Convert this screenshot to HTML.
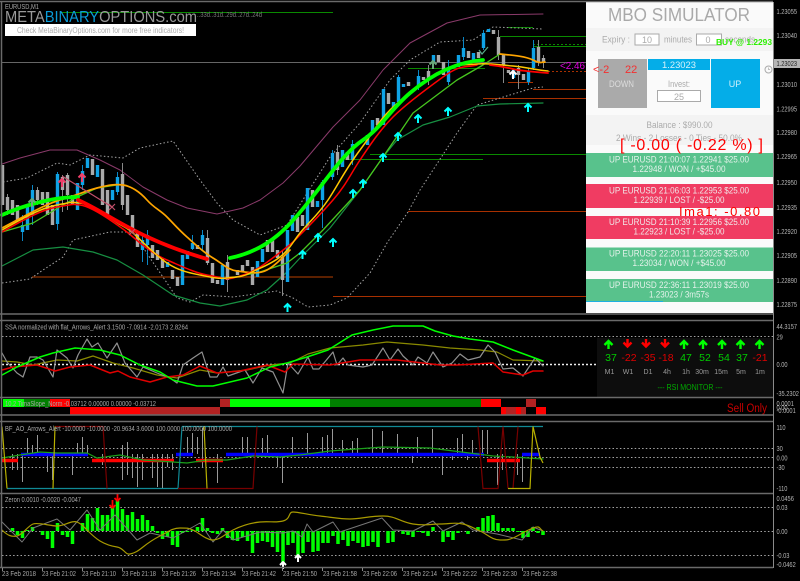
<!DOCTYPE html>
<html><head><meta charset="utf-8"><title>MBO Simulator</title>
<style>
html,body{margin:0;padding:0;background:#000;width:800px;height:581px;overflow:hidden}
svg{display:block;filter:blur(.3px)}
text{font-family:"Liberation Sans",sans-serif}
.ax{fill:#b5b5b5;font-size:7.2px}
.t{fill:#a8a8a8;font-size:7.2px}
.c{fill:#f0f6f3;font-size:8.8px;text-anchor:middle;opacity:.92}
.p{fill:#ababab;font-size:9px}
.n{font-size:10.5px;text-anchor:middle}
.l{fill:#999;font-size:7px;text-anchor:middle}
.d{fill:none;stroke:#a5a5a5;stroke-width:1;stroke-dasharray:1.5 2.2}
.f{fill:none;stroke-linejoin:round;stroke-linecap:round}
</style></head><body>
<svg width="800" height="581" viewBox="0 0 800 581" xmlns="http://www.w3.org/2000/svg">
<rect width="800" height="581" fill="#000"/>

<!-- horizontal levels -->
<g fill="none" stroke-width="1">
<path stroke="#0a8a00" d="M60 12.5H333M500 36.5H586M533 46.5H586M508 27.5H533M370 154.5H586M345 159.5H483M408 68.5H485"/>
<path stroke="#0a8a00" stroke-dasharray="2 2" d="M533 44.5H586"/>
<path stroke="#a83000" d="M533 89.5H586M483 98.5H586M508 82.5H533M408 211.5H586M333 296.5H586"/>
<path stroke="#7a2a00" stroke-width="1.5" d="M32 277H333"/>
<path stroke="#a83000" stroke-dasharray="2 2" d="M548 71.5H586"/>
</g>
<path d="M2 62.5H773" stroke="#666" stroke-width="1"/>

<!-- bands -->
<polyline class="f" stroke="#8a3a6a" stroke-width="1" points="2,164 20,158 50,150 77,150 100,160 120,170 143,187 167,200 187,208 217,214 243,208 260,200 283,183 300,166 333,127 360,100 383,70 410,43 447,23 480,15 543,14"/>
<polyline class="d" points="3,182 27,178 57,163 70,165 90,155 123,158 140,148 173,141 200,180 217,203 233,220 260,235 287,225 330,157 360,123 390,80 410,60 440,42 473,40 493,27 543,29"/>
<polyline class="d" points="2,283 30,279 43,270 63,257 73,240 110,232 133,232 150,258 167,283 177,298 190,302 203,295 233,297 277,291 293,298 308,307 330,305 347,298 370,273 387,243 408,212 420,190 457,133 477,105 533,88 543,87"/>
<polyline class="f" stroke="#178f42" stroke-width="1.2" points="2,266 33,250 63,247 93,252 117,260 143,275 173,295 200,303 220,306 247,300 267,290 287,272 300,258 330,228 360,190 383,157 397,140 423,125 450,117 477,106 500,104 543,103"/>

<!-- candles wicks -->
<g fill="none" stroke-width="1">
<path stroke="#888" d="M7.5 194V215M37.5 187V205M62.5 175V212M67.5 173V210M122.5 163V210M207.5 230V265M227.5 255V292M282.5 250V296M337.5 145V175M428.5 65V85M498.5 30V60M503.5 55V83M518.5 65V89M538.5 40V66M543.5 55V68"/>
<path stroke="#0b86c4" d="M22.5 215V241M32.5 185V225M57.5 172V230M82.5 165V190M117.5 172V195M142.5 235V262M147.5 230V265M192.5 235V250M202.5 230V250M322.5 180V228M332.5 150V180M352.5 140V165M398.5 75V105M418.5 70V90M448.5 60V85M463.5 37V60M483.5 30V50M533.5 40V70M528.5 68V85"/>
</g>
<path fill="none" stroke="#aaa" stroke-width="3.4" d="M2.5 165V205M7.5 197V210M12.5 200V215M17.5 205V220M37.5 190V200M42.5 192V205M47.5 192V215M52.5 205V225M62.5 177V190M67.5 175V195M72.5 195V205M92.5 159V175M102.5 169V205M107.5 190V215M122.5 174V205M127.5 195V215M132.5 215V232M137.5 232V247M152.5 245V258M157.5 250V260M162.5 259V268M172.5 270V279M177.5 277V286M197.5 245V249M207.5 238V263M212.5 263V283M217.5 280V284M227.5 262V280M237.5 270V275M242.5 265V272M247.5 260V266M252.5 267V285M267.5 240V252M272.5 240V252M277.5 250V258M282.5 257V280M297.5 217V232M302.5 215V226M312.5 190V207M337.5 152V170M347.5 152V160M377.5 118V125M388.5 93V104M408.5 82V86M423.5 77V80M428.5 71V78M438.5 55V62M443.5 62V75M468.5 51V58M478.5 52V58M493.5 30V34M498.5 37V55M503.5 55V65M508.5 70V73M518.5 68V75M523.5 74V80M538.5 47V62M543.5 58V63"/>
<path fill="none" stroke="#0fa3e6" stroke-width="3.4" d="M22.5 225V232M27.5 205V230M32.5 190V215M57.5 174V224M77.5 183V210M82.5 171V185M87.5 158V168M97.5 165V177M112.5 190V200M117.5 177V192M142.5 240V250M147.5 235V245M167.5 262V267M182.5 255V285M187.5 251V259M192.5 243V249M202.5 235V245M222.5 265V285M257.5 261V277M262.5 249V262M287.5 230V282M292.5 215V231M307.5 188V230M317.5 201V207M322.5 182V200M332.5 153V177M342.5 150V167M352.5 144V160M367.5 135V145M372.5 120V133M383.5 89V125M393.5 102V107M398.5 77V102M403.5 84V87M418.5 76V85M433.5 55V63M448.5 68V82M458.5 55V67M463.5 48V57M473.5 53V60M483.5 33V48M488.5 29V32M513.5 70V78M528.5 71V82M533.5 48V68"/>

<!-- moving averages -->
<polyline class="f" stroke="#47c61e" stroke-width="1.3" points="2,232 33,223 63,205 77,197 97,188 117,185"/>
<polyline class="f" stroke="#47c61e" stroke-width="1.3" points="230,278 260,272 287,263 300,253 323,230 360,190 383,157 413,113 457,80 483,65 500,54"/>
<path class="f" stroke="#ffa500" stroke-width="1.7" d="M2 228C25 216 45 204 63 199S85 191 97 188S115 184 123 185S140 192 147 200S160 210 167 217S178 229 187 237S203 252 213 258S228 270 237 271S258 275 267 270S283 257 290 250"/>
<path class="f" stroke="#ffa500" stroke-width="1.7" d="M500 54C510 55 525 56 533 60S541 62 545 62"/>
<path class="f" stroke="#f00" stroke-width="1.5" d="M2 232C20 222 40 210 57 207S72 204 80 205S100 213 113 222S125 230 133 237S155 255 167 260S195 273 207 275S225 280 233 278S252 272 260 267S278 254 287 247S295 240 300 235S320 215 333 200S350 175 360 160S380 130 393 117S425 90 443 77S465 68 477 65"/>
<path class="f" stroke="#ffc800" stroke-width="1.5" d="M2 230C20 220 40 208 57 205S70 202 80 203S100 211 113 220S125 226 133 233S155 255 167 263S190 273 200 275S218 279 227 278S243 277 250 273S270 265 280 257S292 243 300 233S318 215 328 200S345 170 360 150S378 122 390 110S415 90 427 80S440 72 450 68S465 65 477 64S500 65 513 66S535 70 548 71"/>
<path class="f" stroke="#f00" stroke-width="1.800" d="M490 65C500 66 505 67 513 69S535 72 548 73"/>
<path class="f" stroke="#0f0" stroke-width="3.8" d="M2 215C20 207 50 197 78 197"/>
<path class="f" stroke="#f00" stroke-width="3.8" d="M78 200C110 214 135 238 207 259"/>
<path class="f" stroke="#0f0" stroke-width="3.8" d="M230 258C270 250 290 225 310 200S345 152 363 140S390 110 410 93S455 62 483 60"/>

<!-- arrows main -->
<g fill="none" stroke="#0ff" stroke-width="2">
<path d="M287.5 312V304M284 307.5L287.5 304L291 307.5"/>
<path d="M302.5 259V251M299 254.5L302.5 251L306 254.5M318 242V234M314.5 237.5L318 234L321.5 237.5M333 247V239M329.5 242.5L333 239L336.5 242.5M353 198V190M349.5 193.5L353 190L356.5 193.5M363 188V180M359.5 183.5L363 180L366.5 183.5M383 162V154M379.5 157.5L383 154L386.5 157.5M398 141V133M394.5 136.5L398 133L401.5 136.5M418 123V115M414.5 118.5L418 115L421.5 118.5M448 116V108M444.5 111.5L448 108L451.5 111.5M528 112V104M524.5 107.5L528 104L531.5 107.5"/>
</g>
<path fill="none" stroke="#fff" stroke-width="2" d="M513 79V71M509.5 74.5L513 71L516.5 74.5"/>
<path fill="none" stroke="#6aa87a" stroke-width="2" d="M433 69V61M429.5 64.5L433 61L436.5 64.5M32 207V199M28.5 202.5L32 199L35.5 202.5"/>
<path fill="none" stroke="#f0406a" stroke-width="2" d="M62 187V179M58.5 182.5L62 179L65.5 182.5M82 182V174M78.5 177.5L82 174L85.5 177.5"/>
<path fill="none" stroke="#c2506a" stroke-width="1.2" d="M109 204L115 210M115 204L109 210M129 229L135 235M135 229L129 235M62 176L112 207"/>
<path fill="none" stroke="#5a8" stroke-width="1.2" d="M479 50L482 54L488 47"/>

<!-- header -->
<text x="5" y="9" class="t" textLength="34" lengthAdjust="spacingAndGlyphs">EURUSD,M1</text>
<text x="197" y="17" style="font-size:7px" fill="#777" textLength="65" lengthAdjust="spacingAndGlyphs">..33d..31d..29d..27d..24d</text>
<text x="5" y="22" style="font-size:16px" fill="#999" textLength="192" lengthAdjust="spacingAndGlyphs">META<tspan fill="#0a9bd8">BINARY</tspan>OPTIONS.com</text>
<rect x="5" y="24" width="191" height="12" fill="#fff"/>
<text x="100.5" y="33" style="font-size:8px" fill="#aaa" text-anchor="middle" textLength="167" lengthAdjust="spacingAndGlyphs">Check MetaBinaryOptions.com for more free indicators!</text>

<!-- simulator panel -->
<rect x="586" y="2" width="187" height="311" fill="#fafafa"/>
<rect x="586" y="28" width="187" height="23" fill="#f3f3f3"/>
<rect x="586" y="115" width="187" height="30" fill="#f3f3f3"/>
<text x="679" y="21" style="font-size:18px" fill="#a9a9a9" text-anchor="middle" textLength="142" lengthAdjust="spacingAndGlyphs">MBO SIMULATOR</text>
<text x="602" y="42.5" class="p" textLength="28" lengthAdjust="spacingAndGlyphs">Expiry :</text>
<rect x="635" y="34" width="24" height="11" fill="#fff" stroke="#aaa"/>
<text x="647" y="43" class="p" text-anchor="middle">10</text>
<text x="664" y="42.5" class="p" textLength="28" lengthAdjust="spacingAndGlyphs">minutes</text>
<rect x="696.500" y="34" width="25" height="11" fill="#fff" stroke="#aaa"/>
<text x="708" y="43" class="p" text-anchor="middle">0</text>
<text x="725" y="42.5" class="p" textLength="30" lengthAdjust="spacingAndGlyphs">seconds</text>
<rect x="598" y="59" width="49" height="49" fill="#aaa"/>
<text x="621.500" y="87" class="p" style="fill:#ddd" text-anchor="middle" textLength="25" lengthAdjust="spacingAndGlyphs">DOWN</text>
<rect x="648" y="59" width="62" height="11" fill="#04ade8"/>
<text x="679" y="68" class="p" style="fill:#d6f2fb" text-anchor="middle" textLength="34" lengthAdjust="spacingAndGlyphs">1.23023</text>
<rect x="711" y="59" width="49" height="49" fill="#04ade8"/>
<text x="735" y="87" class="p" style="fill:#cfeffa" text-anchor="middle">UP</text>
<text x="679" y="87" class="p" text-anchor="middle" textLength="22" lengthAdjust="spacingAndGlyphs">Invest:</text>
<rect x="657.500" y="90.500" width="43" height="11" fill="#fff" stroke="#aaa"/>
<text x="679" y="100" class="p" text-anchor="middle">25</text>
<circle cx="768.500" cy="69.500" r="3.500" fill="none" stroke="#aaa"/>
<path d="M768.500 67.500V69.500H770" stroke="#aaa" fill="none" stroke-width=".7"/>
<text x="679.500" y="128" class="p" text-anchor="middle" textLength="66" lengthAdjust="spacingAndGlyphs">Balance : $990.00</text>
<text x="679" y="141" class="p" text-anchor="middle" textLength="126" lengthAdjust="spacingAndGlyphs">2 Wins - 2 Losses - 0 Ties - 50.0%</text>

<rect x="586" y="153" width="187" height="24" fill="#58c28c"/>
<rect x="586" y="184" width="187" height="24" fill="#f03c62"/>
<rect x="586" y="216" width="187" height="23" fill="#f03c62"/>
<rect x="586" y="247.500" width="187" height="23.500" fill="#58c28c"/>
<rect x="586" y="279" width="187" height="23" fill="#58c28c"/>
<rect x="586" y="301" width="77" height="1" fill="#1cb0e0"/>
<text x="679" y="162.500" class="c" textLength="140" lengthAdjust="spacingAndGlyphs">UP EURUSD 21:00:07 1.22941 $25.00</text>
<text x="679" y="172" class="c" textLength="93" lengthAdjust="spacingAndGlyphs">1.22948 / WON / +$45.00</text>
<text x="679" y="193.500" class="c" textLength="140" lengthAdjust="spacingAndGlyphs">UP EURUSD 21:06:03 1.22953 $25.00</text>
<text x="679" y="203" class="c" textLength="91" lengthAdjust="spacingAndGlyphs">1.22939 / LOST / -$25.00</text>
<text x="679" y="225" class="c" textLength="140" lengthAdjust="spacingAndGlyphs">UP EURUSD 21:10:39 1.22956 $25.00</text>
<text x="679" y="234.500" class="c" textLength="91" lengthAdjust="spacingAndGlyphs">1.22923 / LOST / -$25.00</text>
<text x="679" y="256.500" class="c" textLength="140" lengthAdjust="spacingAndGlyphs">UP EURUSD 22:20:11 1.23025 $25.00</text>
<text x="679" y="266" class="c" textLength="93" lengthAdjust="spacingAndGlyphs">1.23034 / WON / +$45.00</text>
<text x="679" y="288" class="c" textLength="140" lengthAdjust="spacingAndGlyphs">UP EURUSD 22:36:11 1.23019 $25.00</text>
<text x="679" y="297.500" class="c" textLength="60" lengthAdjust="spacingAndGlyphs">1.23023 / 3m57s</text>

<!-- overlays -->
<text x="716" y="45" style="font-size:8.500px;font-weight:bold" fill="#2cf000" textLength="56" lengthAdjust="spacingAndGlyphs">BUY @ 1.2293</text>
<text x="620" y="150" style="font-size:16px" fill="#f00" textLength="143">[ -0.00 ( -0.22 %) ]</text>
<text x="679" y="216" style="font-size:13px" fill="#f00" textLength="81">Ima1: -0.80</text>
<text x="560" y="69" style="font-size:10.500px" fill="#e000e0" textLength="25" lengthAdjust="spacingAndGlyphs">&lt;2.46</text>
<text x="593" y="73" style="font-size:11px" fill="#f33030">&lt;-2</text>
<text x="625" y="73" style="font-size:11px" fill="#f33030">22</text>

<!-- SSA panel -->
<path class="d" d="M2 336.500H773"/>
<path d="M2 364.500H597" fill="none" stroke="#eee" stroke-width="1.500" stroke-dasharray="2 2"/>
<rect x="597" y="338" width="176" height="59" fill="#0d0d0d"/>
<text x="5" y="329.500" class="t" textLength="183" lengthAdjust="spacingAndGlyphs">SSA normalized with flat_Arrows_Alert 3.1500 -7.0914 -2.0173 2.8264</text>
<polyline class="f" stroke="#8a8a00" stroke-width="1.200" points="2,361 17,362 33,365 57,360 77,361 93,356 113,363 133,368 157,375 177,378 200,370 217,373 247,370 270,365 290,363 308,354 330,348 363,345 387,342 423,345 450,348 480,350 497,352 513,360 543,361"/>
<polyline class="f" stroke="#909090" stroke-width="1.200" points="2,353 7,362 17,373 23,377 30,357 37,357 43,360 53,377 57,350 67,358 73,368 78,355 87,339 92,347 98,343 107,358 117,343 125,363 137,377 143,367 157,373 170,378 177,383 183,365 193,358 202,352 210,377 217,377 223,367 228,376 245,370 253,383 262,368 273,372 283,393 288,363 298,374 308,357 313,369 319,369 333,352 337,365 343,358 348,365 363,367 372,365 383,348 390,360 398,349 403,356 413,365 418,357 427,363 433,352 443,367 452,363 460,354 468,360 480,357 488,345 495,352 503,369 513,368 523,376 535,358 543,366"/>
<polyline class="f" stroke="#e00000" stroke-width="1.500" points="2,370 13,367 37,365 55,371 70,367 90,365 110,373 118,371 130,377 150,382 167,377 183,375 200,366 217,373 240,371 267,365 285,372 293,364 330,365 360,360 397,360 440,365 457,365 493,363 503,372 523,375 533,371 543,371"/>
<polyline class="f" stroke="#0f0" stroke-width="1.500" points="2,375 17,367 40,357 53,353 75,348 100,350 120,355 140,365 160,372 173,380 197,386 213,386 247,378 270,367 287,363 307,357 328,350 352,335 373,330 393,326 423,326 435,331 453,336 470,339 493,342 513,350 543,361"/>

<!-- RSI monitor -->
<g fill="none" stroke-width="2.400">
<path stroke="#0f0" d="M608.500 349V341M604.500 345L608.500 341L612.500 345M684 349V341M680 345L684 341L688 345M703 349V341M699 345L703 341L707 345M722 349V341M718 345L722 341L726 345M740.500 349V341M736.500 345L740.500 341L744.500 345M759.500 349V341M755.500 345L759.500 341L763.500 345"/>
<path stroke="#f00" d="M627.500 339V346M623.500 342.500L627.500 346.500L631.500 342.500M646 339V346M642 342.500L646 346.500L650 342.500M665 339V346M661 342.500L665 346.500L669 342.500"/>
</g>
<text x="611" y="361" class="n" fill="#0c0">37</text>
<text x="629" y="361" class="n" fill="#d00">-22</text>
<text x="648" y="361" class="n" fill="#d00">-35</text>
<text x="666" y="361" class="n" fill="#d00">-18</text>
<text x="686" y="361" class="n" fill="#0c0">47</text>
<text x="705" y="361" class="n" fill="#0c0">52</text>
<text x="724" y="361" class="n" fill="#0c0">54</text>
<text x="742" y="361" class="n" fill="#0c0">37</text>
<text x="760" y="361" class="n" fill="#d00">-21</text>
<text x="609.500" y="374" class="l">M1</text><text x="628" y="374" class="l">W1</text><text x="648" y="374" class="l">D1</text><text x="667" y="374" class="l">4h</text><text x="686" y="374" class="l">1h</text><text x="702" y="374" class="l">30m</text><text x="721" y="374" class="l">15m</text><text x="741" y="374" class="l">5m</text><text x="760" y="374" class="l">1m</text>
<text x="690" y="390" style="font-size:8px" fill="#0a0" text-anchor="middle" textLength="65" lengthAdjust="spacingAndGlyphs">--- RSI MONITOR ---</text>

<!-- Slope panel -->
<g>
<rect x="3" y="399" width="21" height="8" fill="#0f0"/><rect x="24" y="399" width="26" height="8" fill="#008000"/><rect x="50" y="399" width="20" height="8" fill="#f00"/><rect x="220" y="399" width="10" height="8" fill="#b22222"/><rect x="230" y="399" width="100" height="8" fill="#0f0"/><rect x="330" y="399" width="151" height="8" fill="#008000"/><rect x="481" y="399" width="20" height="8" fill="#f00"/><rect x="526" y="399" width="10" height="8" fill="#b22222"/>
<rect x="70" y="407" width="70" height="8" fill="#f00"/><rect x="140" y="407" width="80" height="8" fill="#b22222"/><rect x="501" y="407" width="5" height="8" fill="#f00"/><rect x="506" y="407" width="10" height="8" fill="#b22222"/><rect x="516" y="407" width="5" height="8" fill="#f00"/><rect x="521" y="407" width="5" height="8" fill="#b22222"/><rect x="536" y="407" width="10" height="8" fill="#f00"/>
</g>
<text x="5" y="406" class="t" textLength="151" lengthAdjust="spacingAndGlyphs">10.2 TimaSlope_Norm -0.03712 0.00000 0.00000 -0.03712</text>
<text x="727" y="412" style="font-size:11.500px" fill="#c80000" textLength="40" lengthAdjust="spacingAndGlyphs">Sell Only</text>

<!-- BF panel -->
<path class="d" d="M2 448.500H773M2 457.500H773M2 467.500H773"/>
<path fill="none" stroke="#999" d="M27.500 454V438M32.500 454V445M37.500 454V435M77.500 454V443M82.500 454V437M87.500 454V445M122.500 454V445M127.500 454V442M187.500 454V437M192.500 454V433M197.500 454V437M202.500 454V428M242.500 454V437M247.500 454V437M262.500 454V438M267.500 454V435M292.500 454V437M307.500 454V433M322.500 454V437M327.500 454V435M332.500 454V429M342.500 454V440M352.500 454V441M357.500 454V438M372.500 454V429M382.500 454V431M397.500 454V434M417.500 454V437M432.500 454V429M457.500 454V438M462.500 454V434M472.500 454V440M482.500 454V430M487.500 454V430M12.500 454V470M17.500 454V470M22.500 454V482M47.500 454V472M52.500 454V480M72.500 454V475M102.500 454V465M122.500 454V480M127.500 454V475M132.500 454V478M137.500 454V487M142.500 454V480M152.500 454V478M157.500 454V487M162.500 454V488M167.500 454V467M172.500 454V470M202.500 454V468M217.500 454V483M277.500 454V467M282.500 454V483M412.500 454V463M442.500 454V475M452.500 454V460M467.500 454V460M497.500 454V485M502.500 454V470M517.500 454V475M522.500 454V482"/>
<path fill="none" stroke="#0000ff" stroke-width="3.500" d="M21 454.500H88M176 454.500H193M226 454.500H484M522 454.500H540"/>
<path fill="none" stroke="#f00" stroke-width="3.500" d="M2 460.500H18M92 460.500H174M196 460.500H223M487 460.500H520"/>
<polyline class="f" stroke="#1aa01a" stroke-width="1.200" points="2,458 20,455 40,452 57,453 87,453 97,458 120,455 143,460 173,462 187,463 207,460 227,460 253,456 280,457 300,455 330,451 383,447 430,448 493,456 513,457 543,459"/>
<path fill="none" stroke="#108a96" stroke-width="1.200" d="M182 426.500H543M7 488.500H178L182 426.500"/>
<path fill="none" stroke="#780000" stroke-width="1.200" d="M55 426.500H103L107 488.500M178 488.500H253L257 426.500M478 426.500L483 488.500H498L503 426.500L508 488.500M518 426.500L513 488.500"/>
<path fill="none" stroke="#b8b000" stroke-width="1.200" d="M2 426.500L7 488.500M53 488.500L55 426.500M204 426.500L207 488.500M508 488.500H530L533 426.500L540 457L543 463"/>
<text x="5" y="431" class="t" textLength="227" lengthAdjust="spacingAndGlyphs">BF_AO_Arrows_Alert -10.0000 -10.0000 -20.9634 3.6000 100.0000 100.0000 100.0000</text>

<!-- Zeron panel -->
<path class="d" d="M2 507.500H773M2 531.500H773M2 555.500H773"/>
<path fill="none" stroke="#0f0" stroke-width="3.500" d="M12.500 531V528M17.500 531V535M22.500 531V538M27.500 531V530M32.500 531V527M42.500 531V535M47.500 531V539M52.500 531V548M57.500 531V523M62.500 531V535M67.500 531V537M72.500 531V544M82.500 531V523M87.500 531V514M92.500 531V518M97.500 531V508M102.500 531V515M107.500 531V515M112.500 531V507M117.500 531V499M122.500 531V509M127.500 531V515M132.500 531V512M137.500 531V519M142.500 531V515M147.500 531V520M152.500 531V526M157.500 531V533M162.500 531V539M167.500 531V537M172.500 531V545M177.500 531V547M182.500 531V533M187.500 531V532M192.500 531V530M197.500 531V527M202.500 531V518M207.500 531V528M212.500 531V533M217.500 531V534M222.500 531V528M227.500 531V538M232.500 531V540M237.500 531V541M242.500 531V537M247.500 531V541M252.500 531V553M257.500 531V543M262.500 531V541M267.500 531V542M272.500 531V547M277.500 531V552M283 531V563M288 531V545M293 531V543M298 531V557M303 531V553M308 531V542M313 531V552M318 531V551M323 531V543M328 531V543M333 531V536M338 531V544M343 531V540M348 531V546M353 531V541M358 531V543M363 531V547M368 531V546M373 531V542M378 531V547M388 531V543M393 531V542M403 531V534M408 531V535M413 531V537M418 531V532M423 531V533M428 531V536M433 531V527M443 531V542M448 531V537M453 531V540M458 531V533M468 531V534M478 531V527M483 531V518M488 531V516M493 531V515M498 531V523M503 531V528M508 531V528M513 531V528M518 531V532M523 531V538M528 531V537M533 531V527M538 531V533M543 531V535"/>
<polyline class="f" stroke="#777" stroke-width="1" points="2,522 10,530 22,542 33,528 57,519 70,530 87,510 100,530 115,515 130,532 137,540 150,533 173,538 200,523 213,542 223,530 233,540 260,532 283,533 293,531 302,537 307,524 313,532 333,522 340,532 382,518 393,530 413,531 433,521 443,531 462,522 473,530 497,534 522,540 533,527 543,531"/>
<path class="f" stroke="#a89a00" stroke-width="1.200" d="M2 530C8 536 12 537 17 536S28 526 33 524S50 526 57 526S72 520 77 522S84 527 87 530S95 538 100 541S110 546 117 547S125 555 130 554S138 551 143 547S152 540 160 536S172 528 180 528S188 528 193 530S206 540 213 540S225 534 233 530S250 523 260 522S275 523 283 521S288 512 293 512S310 515 320 516S340 519 350 519S370 516 383 516S400 522 413 524S430 524 440 524S455 522 463 524S473 528 480 531S492 540 500 540S508 540 513 538S525 531 533 528S539 529 543 531"/>
<path fill="none" stroke="#f00" stroke-width="1.800" d="M112.500 500V508M109.500 505L112.500 508L115.500 505M117.500 493V501M114.500 498L117.500 501L120.500 498"/>
<path fill="none" stroke="#fff" stroke-width="2" d="M283 569V562M280 565L283 562L286 565M298 562V555M295 558L298 555L301 558"/>
<text x="5" y="502" class="t" textLength="76" lengthAdjust="spacingAndGlyphs">Zeron 0.0010 -0.0020 -0.0047</text>

<!-- frames -->
<g fill="none" stroke="#6a6a6a">
<path stroke-width="1.500" d="M0 1.500H773M1.500 1V568M0 314H773M0 320.500H773M0 397.500H773M0 415H773M0 421.500H773M0 493.500H773M0 567.500H773"/>
<path stroke="#8a8a8a" stroke-width="1" d="M773.500 2V568"/>
<path stroke="#8a8a8a" d="M2.500 568V571M42.500 568V571M82.500 568V571M122.500 568V571M162.500 568V571M202.500 568V571M242.500 568V571M282.500 568V571M322.500 568V571M362.500 568V571M402.500 568V571M442.500 568V571M482.500 568V571M522.500 568V571"/>
</g>

<!-- axis -->
<rect x="774" y="59" width="26" height="9" fill="#b5b5b5"/>
<g transform="translate(776.500 0) scale(.79 1)">
<text x="0" y="14" class="ax">1.23055</text><text x="0" y="38" class="ax">1.23040</text><text x="0" y="66" class="ax" style="fill:#222">1.23023</text><text x="0" y="87" class="ax">1.23010</text><text x="0" y="111.500" class="ax">1.22995</text><text x="0" y="135" class="ax">1.22980</text><text x="0" y="159" class="ax">1.22965</text><text x="0" y="185" class="ax">1.22950</text><text x="0" y="210" class="ax">1.22935</text><text x="0" y="234" class="ax">1.22920</text><text x="0" y="258" class="ax">1.22905</text><text x="0" y="283" class="ax">1.22890</text><text x="0" y="307" class="ax">1.22875</text>
<text x="0" y="329" class="ax">44.3157</text><text x="0" y="339.500" class="ax">29</text><text x="0" y="367" class="ax">0.00</text><text x="0" y="396" class="ax">-35.2302</text>
<text x="0" y="406" class="ax">0.0001</text><text x="0" y="410" class="ax">0.00</text><text x="0" y="413" class="ax">-0.0001</text>
<text x="0" y="430" class="ax">110</text><text x="0" y="451" class="ax">30</text><text x="0" y="460.500" class="ax">0.00</text><text x="0" y="470" class="ax">-30</text><text x="0" y="491" class="ax">-110</text>
<text x="0" y="501" class="ax">0.0456</text><text x="0" y="510" class="ax">0.03</text><text x="0" y="534" class="ax">0.00</text><text x="0" y="558" class="ax">-0.03</text><text x="0" y="567" class="ax">-0.0462</text>
</g>

<!-- time axis -->
<text x="2" y="576" class="t" textLength="34" lengthAdjust="spacingAndGlyphs">23 Feb 2018</text><text x="42" y="576" class="t" textLength="34" lengthAdjust="spacingAndGlyphs">23 Feb 21:02</text><text x="82" y="576" class="t" textLength="34" lengthAdjust="spacingAndGlyphs">23 Feb 21:10</text><text x="122" y="576" class="t" textLength="34" lengthAdjust="spacingAndGlyphs">23 Feb 21:18</text><text x="162" y="576" class="t" textLength="34" lengthAdjust="spacingAndGlyphs">23 Feb 21:26</text><text x="202" y="576" class="t" textLength="34" lengthAdjust="spacingAndGlyphs">23 Feb 21:34</text><text x="242" y="576" class="t" textLength="34" lengthAdjust="spacingAndGlyphs">23 Feb 21:42</text><text x="283" y="576" class="t" textLength="34" lengthAdjust="spacingAndGlyphs">23 Feb 21:50</text><text x="323" y="576" class="t" textLength="34" lengthAdjust="spacingAndGlyphs">23 Feb 21:58</text><text x="363" y="576" class="t" textLength="34" lengthAdjust="spacingAndGlyphs">23 Feb 22:06</text><text x="403" y="576" class="t" textLength="34" lengthAdjust="spacingAndGlyphs">23 Feb 22:14</text><text x="443" y="576" class="t" textLength="34" lengthAdjust="spacingAndGlyphs">23 Feb 22:22</text><text x="483" y="576" class="t" textLength="34" lengthAdjust="spacingAndGlyphs">23 Feb 22:30</text><text x="523" y="576" class="t" textLength="34" lengthAdjust="spacingAndGlyphs">23 Feb 22:38</text>
</svg>
</body></html>
